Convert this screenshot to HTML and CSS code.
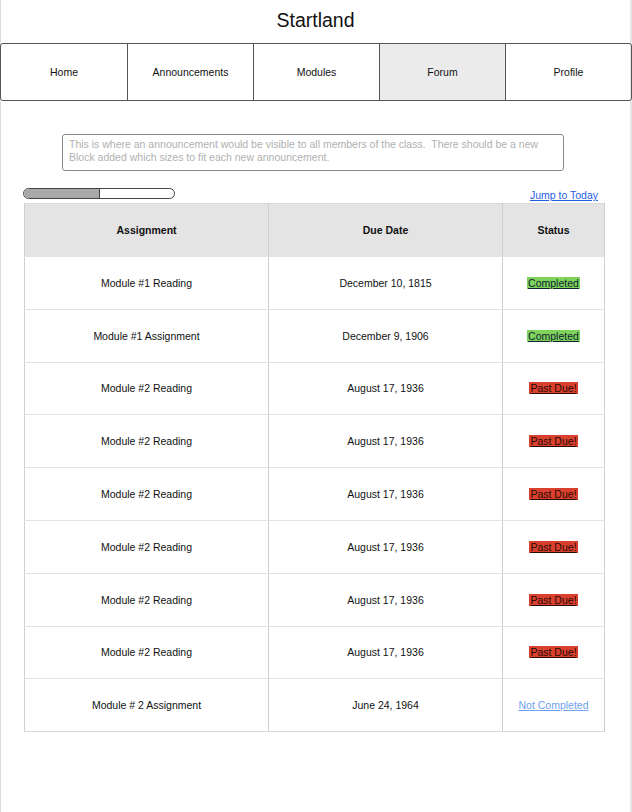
FILE: index.html
```html
<!DOCTYPE html>
<html>
<head>
<meta charset="utf-8">
<link rel="stylesheet" href="styles.css">
</head>
<body>
<div class="page">
  <h1 class="title">Startland</h1>
  <nav class="nav">
    <a class="nav-item">Home</a>
    <a class="nav-item">Announcements</a>
    <a class="nav-item">Modules</a>
    <a class="nav-item active">Forum</a>
    <a class="nav-item">Profile</a>
  </nav>
  <div class="announce">This is where an announcement would be visible to all members of the class.&nbsp; There should be a new Block added which sizes to fit each new announcement.</div>
  <div class="toolbar">
    <div class="progress"><div class="progress-fill"></div></div>
    <a class="jump" href="#">Jump to Today</a>
  </div>
  <table class="grid">
    <thead>
      <tr><th class="c1">Assignment</th><th class="c2">Due Date</th><th class="c3">Status</th></tr>
    </thead>
    <tbody>
      <tr><td>Module #1 Reading</td><td>December 10, 1815</td><td><span class="badge done">Completed</span></td></tr>
      <tr><td>Module #1 Assignment</td><td>December 9, 1906</td><td><span class="badge done">Completed</span></td></tr>
      <tr><td>Module #2 Reading</td><td>August 17, 1936</td><td><span class="badge late">Past Due!</span></td></tr>
      <tr><td>Module #2 Reading</td><td>August 17, 1936</td><td><span class="badge late">Past Due!</span></td></tr>
      <tr><td>Module #2 Reading</td><td>August 17, 1936</td><td><span class="badge late">Past Due!</span></td></tr>
      <tr><td>Module #2 Reading</td><td>August 17, 1936</td><td><span class="badge late">Past Due!</span></td></tr>
      <tr><td>Module #2 Reading</td><td>August 17, 1936</td><td><span class="badge late">Past Due!</span></td></tr>
      <tr><td>Module #2 Reading</td><td>August 17, 1936</td><td><span class="badge late">Past Due!</span></td></tr>
      <tr><td>Module # 2 Assignment</td><td>June 24, 1964</td><td><span class="badge todo">Not Completed</span></td></tr>
    </tbody>
  </table>
</div>
</body>
</html>
```

FILE: styles.css
```css
html, body {
  margin: 0;
  padding: 0;
  background: #fff;
}
.page {
  box-sizing: border-box;
  width: 632px;
  min-height: 812px;
  border-left: 1px solid #dcdcdc;
  border-right: 2px solid #e6e6e6;
  font-family: "Liberation Sans", Arial, sans-serif;
  color: #111;
  padding-bottom: 20px;
}
.title {
  margin: 0;
  height: 43px;
  line-height: 40px;
  font-size: 19.5px;
  font-weight: normal;
  text-align: center;
  color: #111;
}
.nav {
  display: grid;
  grid-template-columns: repeat(5, 1fr);
  height: 58px;
  box-sizing: border-box;
  border: 1px solid #555;
  border-radius: 3px;
  margin-left: -1px;
  margin-right: -2px;
  overflow: hidden;
}
.nav-item {
  display: flex;
  align-items: center;
  justify-content: center;
  font-size: 10.5px;
  color: #111;
  border-left: 1px solid #555;
}
.nav-item:first-child {
  border-left: none;
}
.nav-item.active {
  background: #ebebeb;
}
.announce {
  box-sizing: border-box;
  width: 502px;
  height: 37px;
  margin: 33px 0 0 61px;
  border: 1px solid #8a8a8a;
  border-radius: 3px;
  padding: 3px 6px;
  font-size: 10.5px;
  line-height: 13px;
  color: #b0b0b0;
}
.toolbar {
  display: flex;
  justify-content: space-between;
  align-items: flex-end;
  margin: 17px 0 0 22px;
  width: 575px;
  height: 15px;
}
.progress {
  align-self: flex-start;
  box-sizing: border-box;
  width: 152px;
  height: 11px;
  border: 1px solid #444;
  border-radius: 6px;
  overflow: hidden;
  background: #fff;
}
.progress-fill {
  width: 75px;
  height: 100%;
  background: #a8a8a8;
  border-right: 1px solid #444;
}
.jump {
  font-size: 10.5px;
  color: #1f5fe0;
  text-decoration: underline;
  line-height: 12px;
  margin-bottom: 2px;
}
.grid {
  margin: 0 0 0 23px;
  width: 581px;
  border-collapse: collapse;
  font-size: 10.5px;
  table-layout: fixed;
}
.grid th, .grid td {
  text-align: center;
  vertical-align: middle;
  border-left: 1px solid #cfcfcf;
  border-right: 1px solid #cfcfcf;
  border-bottom: 1px solid #e2e2e2;
  padding: 0;
}
.grid th {
  background: #e4e4e4;
  font-weight: bold;
  height: 52px;
  border-top: 1px solid #dadada;
}
.grid td {
  height: 51.8px;
}
.grid tbody tr:last-child td {
  border-bottom: 1px solid #d6d6d6;
}
.c1 { width: 243px; }
.c2 { width: 233px; }
.c3 { width: auto; }
.badge {
  padding: 0 1px;
  text-decoration: underline;
}
.done {
  background: #7ed35a;
  color: #123;
}
.late {
  background: #d9402e;
  color: #2a0a05;
}
.todo {
  color: #6f9ff0;
}
```
